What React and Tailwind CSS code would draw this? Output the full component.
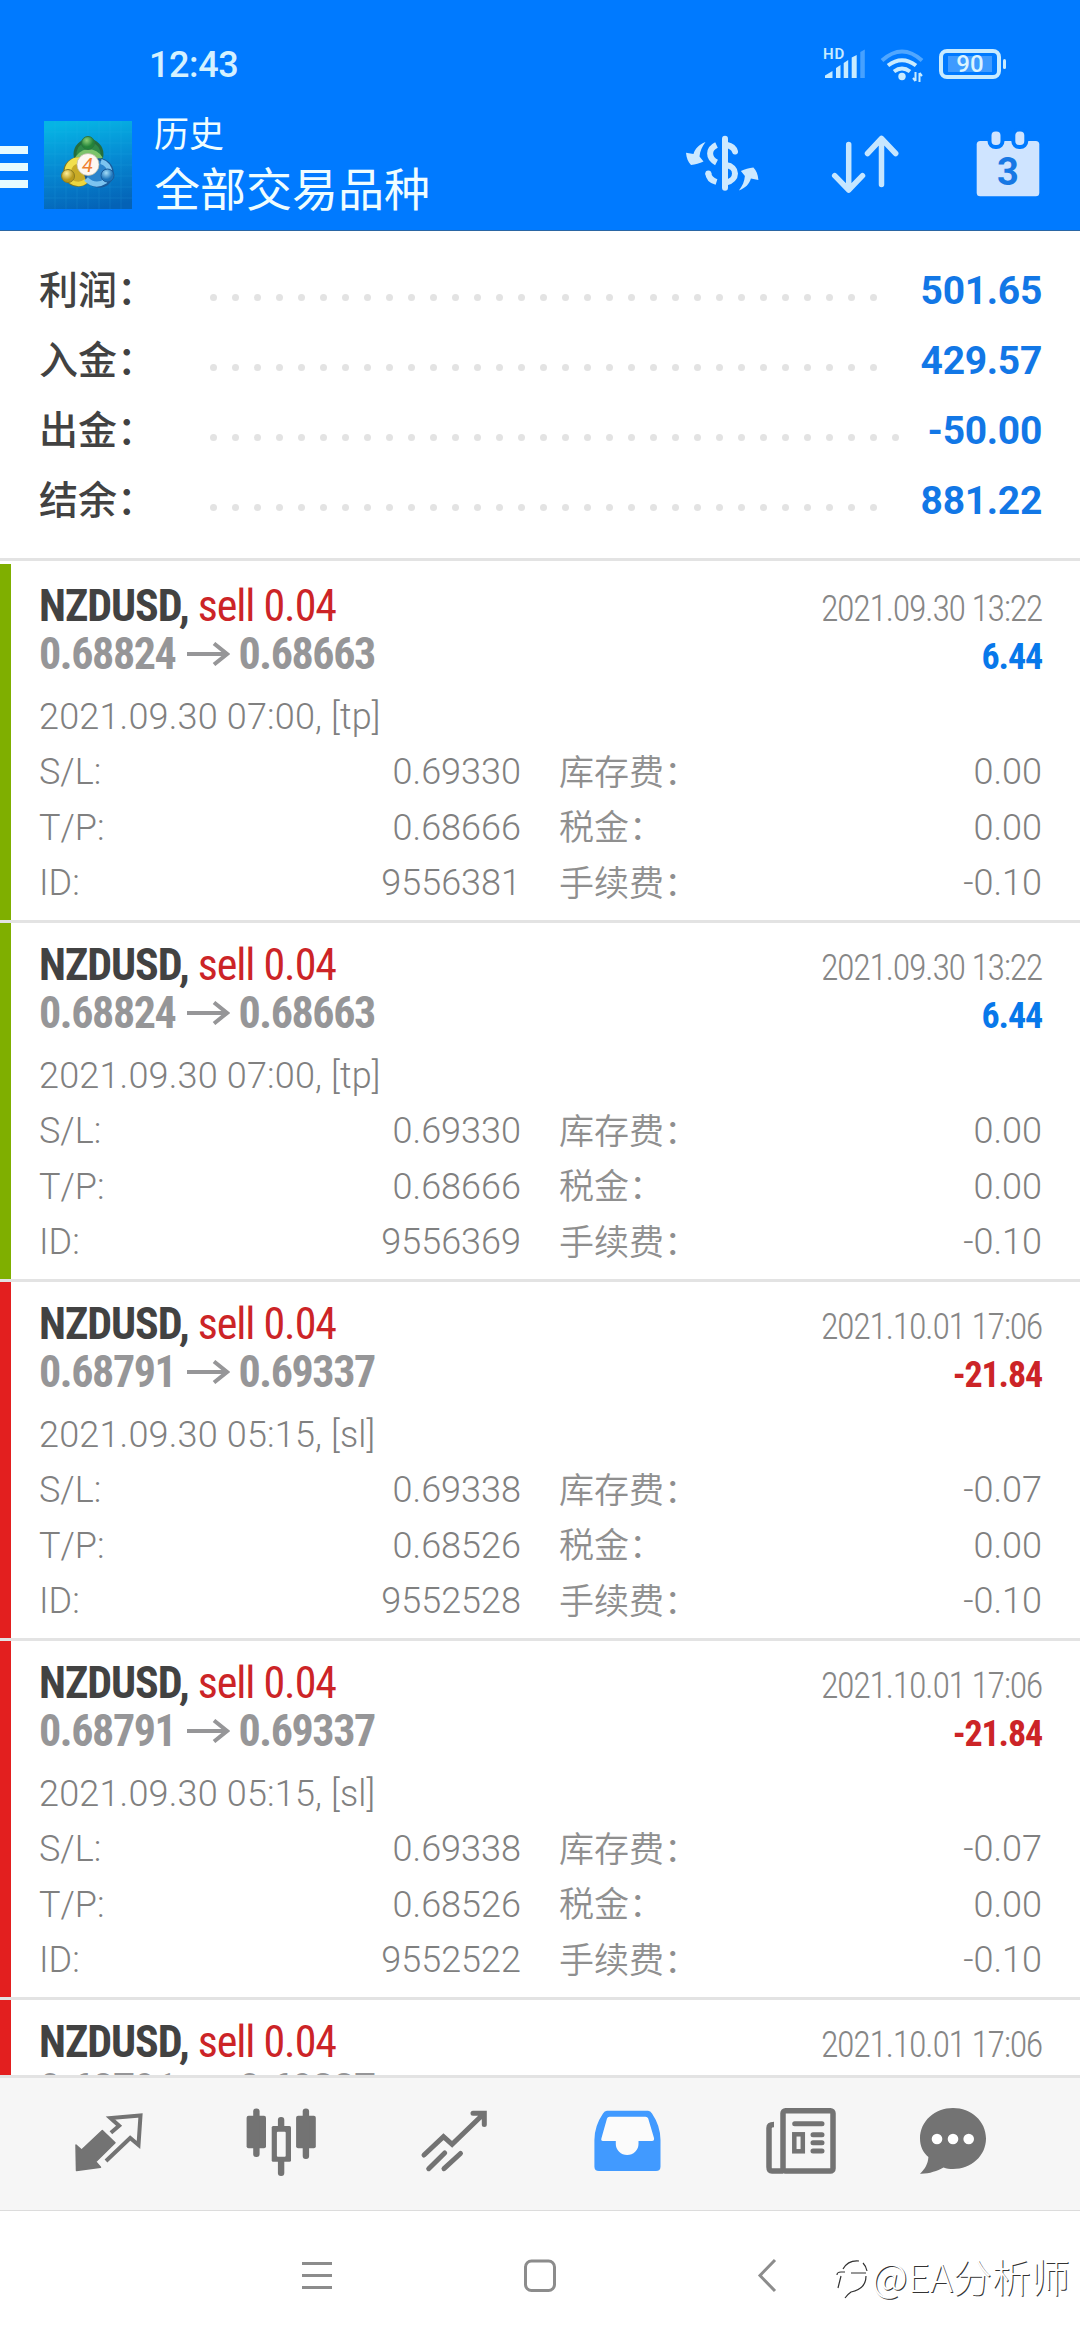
const COLON = '\uff1a'

const summary = [
  { label: '利润', value: '501.65', dots: 31 },
  { label: '入金', value: '429.57', dots: 31 },
  { label: '出金', value: '-50.00', dots: 32 },
  { label: '结余', value: '881.22', dots: 31 },
]

const tp = { open: '0.68824', close: '0.68663', closed: '2021.09.30 13:22', profit: '6.44', opened: '2021.09.30 07:00, [tp]', sl: '0.69330', tp: '0.68666', swap: '0.00' }
const sl = { open: '0.68791', close: '0.69337', closed: '2021.10.01 17:06', profit: '-21.84', opened: '2021.09.30 05:15, [sl]', sl: '0.69338', tp: '0.68526', swap: '-0.07' }

const deals = [
  { ...tp, id: '9556381' },
  { ...tp, id: '9556369' },
  { ...sl, id: '9552528' },
  { ...sl, id: '9552522' },
  { ...sl, id: '9552519' },
]

const condensed = "font-['Roboto_Condensed','Roboto',sans-serif] font-stretch-condensed whitespace-nowrap"

function SignalIcon() {
  return (
    <svg className="h-[40px] w-[48px]" viewBox="0 0 48 40" fill="#c8ebff">
      <text x="2" y="14.7" fontSize="15" fontWeight="600" fontFamily="Roboto, sans-serif" letterSpacing="0.8">HD</text>
      <path d="M4 34v-2.5l7.500-4.500v7zM15 34V24l4.500-3v13zM22.700 34V19l4.500-3v18zM30.700 34V13.500l5-2.500v23z" />
      <path d="M39.300 34V8l4.500-2.500V34z" opacity="0.35" />
    </svg>
  )
}

function WifiIcon() {
  return (
    <svg className="h-[40px] w-[50px]" viewBox="0 0 50 40" fill="none" stroke="#c8ebff" strokeWidth="4">
      <path d="M3 16.500Q23 -1.500 43 16.500" opacity="0.4" />
      <path d="M9 21.500Q23 11 37 21.500" />
      <path d="M15 27.500Q23 21.500 31 27.500" />
      <circle cx="23" cy="32.500" r="3.700" fill="#c8ebff" stroke="none" />
      <path d="M36.500 28v9M36.500 37l-2.500-3M40.500 38v-9M40.500 29l2.500 3" strokeWidth="2" />
    </svg>
  )
}

function Battery() {
  return (
    <div className="flex items-center gap-[2px]">
      <div className="flex h-[30px] w-[62px] items-center justify-center rounded-[8px] border-4 border-[#c8ebff]">
        <span className="flex h-[16px] w-[44px] items-center justify-center bg-[#3f9bff] text-[24px] leading-none font-medium text-[#dcf4ff]">90</span>
      </div>
      <div className="h-[10px] w-[3px] rounded-full bg-[#c8ebff]" />
    </div>
  )
}

function AppLogo() {
  return (
    <svg className="h-[88px] w-[88px]" viewBox="0 0 88 88">
      <defs>
        <linearGradient id="sky" x1="0.400" y1="0" x2="0.600" y2="1">
          <stop offset="0" stopColor="#06b4e4" />
          <stop offset="0.500" stopColor="#0688d2" />
          <stop offset="1" stopColor="#0462b6" />
        </linearGradient>
        <radialGradient id="green" cx="0.400" cy="0.300">
          <stop offset="0" stopColor="#8ccf78" />
          <stop offset="1" stopColor="#23843a" />
        </radialGradient>
        <radialGradient id="gold" cx="0.400" cy="0.300">
          <stop offset="0" stopColor="#fff09a" />
          <stop offset="1" stopColor="#b99a1c" />
        </radialGradient>
        <radialGradient id="blue" cx="0.400" cy="0.300">
          <stop offset="0" stopColor="#a4ddf8" />
          <stop offset="1" stopColor="#1c74bb" />
        </radialGradient>
      </defs>
      <rect width="88" height="88" fill="url(#sky)" />
      <path d="M11 0v88M22 0v88M33 0v88M44 0v88M55 0v88M66 0v88M77 0v88M0 11h88M0 22h88M0 33h88M0 44h88M0 55h88M0 66h88M0 77h88" stroke="#35bdf0" strokeWidth="0.800" opacity="0.180" />
      <circle cx="44.500" cy="33" r="13.500" fill="#2f8a48" stroke="#256d3c" strokeWidth="3" />
      <path d="M33 40A12.500 12.500 0 0 1 56 38" fill="none" stroke="#7cc46c" strokeWidth="6" />
      <circle cx="34" cy="51" r="13.500" fill="#c9ab26" stroke="#7f7720" strokeWidth="2.500" />
      <path d="M24 52A11 11 0 0 1 36 39.500" fill="none" stroke="#f2e04e" strokeWidth="6.500" />
      <path d="M26 60Q35 66 42 60" fill="none" stroke="#ecd63f" strokeWidth="4.500" />
      <circle cx="55" cy="52" r="13.500" fill="#2b84cc" stroke="#1a5c9c" strokeWidth="2.500" />
      <path d="M57 40.500A12 12 0 0 1 66 52M42 58Q51 67 62 60" fill="none" stroke="#7cc4f0" strokeWidth="5" />
      <circle cx="44" cy="22" r="6.500" fill="url(#green)" stroke="#2a7440" />
      <circle cx="24" cy="55" r="6.500" fill="url(#gold)" stroke="#8b7c20" />
      <circle cx="63.500" cy="54.500" r="6.500" fill="url(#blue)" stroke="#1a5c9c" />
      <circle cx="44" cy="43.500" r="11" fill="#fdf8f2" stroke="#b9b8a4" strokeWidth="0.700" />
      <text x="43.500" y="50.500" textAnchor="middle" fontSize="20" fontStyle="italic" fontFamily="Roboto, sans-serif" fill="#ef8030">4</text>
    </svg>
  )
}

function CurrencyIcon() {
  const arrow = 'M23.500 10C17 12.500 13 16.500 11.500 22L4 20.700C4.500 26 6 30 9 33C13.500 32.500 17.500 31.500 21.500 29.500L17.500 24.500C18 19 20 14.500 23.500 10Z'
  return (
    <svg className="h-[64px] w-[80px]" viewBox="0 0 80 64" fill="none" stroke="#cde9ff" strokeWidth="6">
      <path d={arrow} fill="#cde9ff" stroke="none" />
      <path d={arrow} fill="#cde9ff" stroke="none" transform="rotate(180 40.200 34.300)" />
      <path d="M34.500 13C26 17 26 26 34.500 30.500M34.500 50C29.500 48.500 26.500 45 26.300 41" />
      <circle cx="26.300" cy="41.500" r="3" fill="#cde9ff" stroke="none" />
      <path d="M43 6.700V55.700" strokeLinecap="round" />
      <path d="M45 13C49.500 14 52 16 53 19.500" strokeLinecap="round" />
      <path d="M44 33C56 34.500 56 48 44 50.500" />
    </svg>
  )
}

function SortIcon() {
  return (
    <svg className="h-[64px] w-[76px]" viewBox="0 0 76 64" fill="none" stroke="#c6e6ff" strokeWidth="5.500" strokeLinecap="round" strokeLinejoin="round">
      <path d="M20.700 12.500V58M6.700 43.700L20.700 58L34.500 43.700" />
      <path d="M53.500 52.500V6.500M39.500 21.500L53.500 6.500L67.700 21.500" />
    </svg>
  )
}

function CalendarIcon() {
  return (
    <svg className="h-[72px] w-[72px]" viewBox="0 0 72 72" fill="#cfe4ff">
      <rect x="4.700" y="13" width="62.600" height="55.300" rx="3.500" />
      <g stroke="#007aff" strokeWidth="4">
        <rect x="17.500" y="1.500" width="13" height="17.500" rx="6" />
        <rect x="41.300" y="1.500" width="13" height="17.500" rx="6" />
      </g>
      <text x="36" y="56.500" textAnchor="middle" fontSize="38" fontWeight="700" fontFamily="Roboto, sans-serif" fill="#1878e4">3</text>
    </svg>
  )
}

function Header() {
  return (
    <header className="h-[231px] shrink-0 border-b border-[#2a66a4] bg-[#007aff]">
      <div className="flex h-[109px] items-start justify-between pt-[44px] pr-[74px] pl-[149px]">
        <span className="text-[36px] leading-[42px] font-medium tracking-[-0.400px] text-[#d4f1ff]">12:43</span>
        <div className="flex items-start">
          <SignalIcon />
          <div className="ml-[10px]"><WifiIcon /></div>
          <div className="mt-[5px] ml-[10px]"><Battery /></div>
        </div>
      </div>
      <div className="flex">
        <div className="mt-[37px] flex w-[28px] flex-col gap-[9px]">
          <i className="h-[8px] bg-[#e6fbff]" />
          <i className="h-[8px] bg-[#e6fbff]" />
          <i className="h-[8px] bg-[#e6fbff]" />
        </div>
        <div className="mt-[12px] ml-[16px]"><AppLogo /></div>
        <div className="ml-[22px] flex flex-1 flex-col font-['Noto_Sans_CJK_SC',sans-serif] text-[#effdff]">
          <span className="mt-[3px] text-[35px] leading-[40px]">历史</span>
          <span className="mt-[4px] text-[46px] leading-[60px]">全部交易品种</span>
        </div>
        <div className="mt-[23px]"><CurrencyIcon /></div>
        <div className="mt-[23px] ml-[66px]"><SortIcon /></div>
        <div className="mt-[19px] mr-[36px] ml-[68px]"><CalendarIcon /></div>
      </div>
    </header>
  )
}

function SummaryRow({ row }) {
  return (
    <div className="flex h-[70px] items-center">
      <span className="mb-[6px] w-[171px] font-['Noto_Sans_CJK_SC',sans-serif] text-[39px] font-medium text-[#424242]">
        {row.label}{COLON}
      </span>
      <div className="mt-[15px] flex flex-1 gap-[15px]">
        {Array.from({ length: row.dots }, (_, i) => (
          <i key={i} className="h-[7px] w-[7px] shrink-0 rounded-full bg-[#e3e3e3]" />
        ))}
      </div>
      <span className="mt-[2px] text-[39px] font-bold tracking-[-0.300px] text-[#1277e6]">{row.value}</span>
    </div>
  )
}

function DetailRow({ label, value, fee, amount }) {
  return (
    <div className="flex h-[55.500px] items-center pt-px text-[36px] font-light text-[#808080]">
      <span className="w-[200px]">{label}</span>
      <span className="w-[282px] text-right">{value}</span>
      <span className="mb-[5px] ml-[38px] flex-1 font-['Noto_Sans_CJK_SC',sans-serif] text-[35px] font-[350] text-[#8f8f8f]">{fee}{COLON}</span>
      <span>{amount}</span>
    </div>
  )
}

function Deal({ deal }) {
  const loss = deal.profit.startsWith('-')
  return (
    <div className="flex h-[359px] shrink-0 border-b-3 border-[#e3e3e3]">
      <div className={`w-[11px] ${loss ? 'bg-[#e31f1f]' : 'bg-[#7faf00]'}`} />
      <div className="flex-1 pt-[17px] pr-[38px] pl-[28px]">
        <div className="flex h-[49px] items-center justify-between">
          <span className={`${condensed} text-[44px] tracking-[-1.050px]`}>
            <b className="text-[#424242]">NZDUSD,</b> <span className="text-[#cc2427]">sell 0.04</span>
          </span>
          <span className={`${condensed} mt-[7px] text-[36px] font-[350] tracking-[-1.350px] text-[#868686]`}>{deal.closed}</span>
        </div>
        <div className="flex h-[48px] items-center">
          <b className={`${condensed} text-[44px] tracking-[-1.400px] text-[#969698]`}>{deal.open}</b>
          <svg className="mr-[8px] ml-[11px] h-[24px] w-[44px]" viewBox="0 0 44 24" fill="none" stroke="#969698" strokeWidth="4">
            <path d="M1 12H41M28 1.500L41 12L28 22.500" />
          </svg>
          <b className={`${condensed} text-[44px] tracking-[-1.400px] text-[#969698]`}>{deal.close}</b>
          <b className={`${condensed} mt-[6px] ml-auto text-[36px] tracking-[-1.150px] ${loss ? 'text-[#cc2427]' : 'text-[#0878ea]'}`}>{deal.profit}</b>
        </div>
        <p className="mt-[11px] h-[55px] text-[36px] leading-[56px] font-light tracking-[0.180px] text-[#808080]">{deal.opened}</p>
        <DetailRow label="S/L:" value={deal.sl} fee="库存费" amount={deal.swap} />
        <DetailRow label="T/P:" value={deal.tp} fee="税金" amount="0.00" />
        <DetailRow label="ID:" value={deal.id} fee="手续费" amount="-0.10" />
      </div>
    </div>
  )
}

function TabBar() {
  return (
    <nav className="flex h-[136px] shrink-0 items-start border-t-3 border-b border-t-[#e3e3e3] border-b-[#dcdcdc] bg-[#f6f6f6] pt-[26px] pl-[69px]">
      <svg className="mr-[92px] h-[80px] w-[80px]" viewBox="0 0 80 80" fill="none" stroke="#737373">
        <path d="M33.300 26.500L46 38.700L26.700 57.700L31.500 63.300L7.500 66.500L7 41L12.600 46Z" fill="#737373" strokeWidth="1.500" strokeLinejoin="round" />
        <path d="M41.900 28.700L50.100 21.700L41.500 14L71.500 11.500L69.500 41L61.200 34L37 57" strokeWidth="4" />
      </svg>
      <svg className="mr-[93px] h-[80px] w-[80px]" viewBox="0 0 80 80" fill="#737373">
        <rect x="5.600" y="11.700" width="19.400" height="32.600" rx="2" />
        <rect x="12.200" y="4.500" width="6.400" height="48.500" rx="3" />
        <rect x="55.100" y="11.700" width="19.700" height="32.600" rx="2" />
        <rect x="61.700" y="4.500" width="6.400" height="50.500" rx="3" />
        <rect x="36.900" y="13" width="6.400" height="59" rx="3" />
        <rect x="30.700" y="22" width="19.300" height="35.700" rx="1.500" />
        <rect x="35.900" y="27.700" width="8.800" height="25" rx="1" fill="#f6f6f6" />
      </svg>
      <svg className="mr-[93px] h-[80px] w-[80px]" viewBox="0 0 80 80" fill="none" stroke="#737373" strokeWidth="5" strokeLinecap="round">
        <path d="M10 51L29.500 32.700L38.100 40.300L70 9.500M59 9.300H70.300V20.500M14.700 64.700L30.700 49M30 64.700L46.500 49.500" />
      </svg>
      <svg className="mr-[94px] h-[80px] w-[80px]" viewBox="0 0 80 80" fill="#419aff">
        <path d="M20 6.700H61Q63.500 6.700 65 9.500Q73.500 22 73.500 36V62.500Q73.500 67 69 67H12Q7.400 67 7.400 62.500V36Q7.400 22 16 9.500Q17.500 6.700 20 6.700Z" />
        <path d="M22.500 12.700H58.500Q60.500 12.700 61.200 14.500L67 34Q67.500 37 65 37H51.500V40A11.300 11 0 0 1 28.800 40V37H16Q13.500 37 14.500 34L20 14.500Q20.500 12.700 22.500 12.700Z" fill="#fbfbfb" />
      </svg>
      <svg className="mr-[72px] h-[80px] w-[80px]" viewBox="0 0 80 80" fill="none" stroke="#737373" strokeWidth="5.500" strokeLinecap="round">
        <rect x="22" y="6.700" width="50" height="60.300" rx="2.500" />
        <path d="M22 67H11Q8 67 8 63V24Q8 20.500 13 20.500" strokeLinecap="butt" />
        <path d="M33.700 19.700H61M52 30.700H61M52 38.700H61M52 47H61" strokeWidth="5" />
        <rect x="33.300" y="30.300" width="8.500" height="17" strokeWidth="4.500" />
      </svg>
      <svg className="h-[80px] w-[80px]" viewBox="0 0 80 80" fill="#737373">
        <path d="M40 4C58 4 73 17 73 34.500C73 52 58 65 40 65C36.500 65 33.500 64.500 30.500 63.500C24 67 16 70 7 69.700C12 65 15 60 15.400 53C10 48.500 7 42 7 34.500C7 17 22 4 40 4Z" />
        <g fill="#ffffff">
          <circle cx="24" cy="35" r="5.300" />
          <circle cx="40" cy="35" r="5.300" />
          <circle cx="55.700" cy="35" r="5.300" />
        </g>
      </svg>
    </nav>
  )
}

function SystemNav() {
  return (
    <div className="flex flex-1 items-start pt-[45px] pl-[300px] text-[#8c8c8c]">
      <svg className="h-[40px] w-[34px] shrink-0" viewBox="0 0 34 40" stroke="currentColor" strokeWidth="3">
        <path d="M2 7.500H32M2 19.500H32M2 31.500H32" />
      </svg>
      <svg className="ml-[188px] h-[40px] w-[36px] shrink-0" viewBox="0 0 36 40" fill="none" stroke="currentColor" strokeWidth="3">
        <rect x="3.500" y="5" width="29" height="29.500" rx="6" />
      </svg>
      <svg className="ml-[198px] h-[40px] w-[22px] shrink-0" viewBox="0 0 22 40" fill="none" stroke="currentColor" strokeWidth="3">
        <path d="M19 4L4 19.500L19 35" />
      </svg>
      <svg className="ml-[58px] h-[48px] w-[36px] shrink-0" viewBox="0 0 36 48" fill="none" stroke="#333333" strokeWidth="1.200">
        <path d="M7 13Q12 4 23 5M1 19Q1 16 5 16L9 16M5 20L2 32M15 17H30M30 20Q30 33 15 36Q12 38 9 42M31 15Q30 10 27 7" />
      </svg>
      <span className="-mt-[4px] font-['Noto_Sans_CJK_SC',sans-serif] text-[39px] leading-[46px] font-light whitespace-nowrap text-white [text-shadow:1px_1px_0px_#333]">@EA分析师</span>
    </div>
  )
}

export default function App() {
  return (
    <div className="flex h-[2340px] w-[1080px] flex-col overflow-hidden bg-white font-['Roboto',sans-serif]">
      <Header />
      <section className="h-[330px] shrink-0 border-b-3 border-[#e3e3e3] pt-[24px] pr-[38px] pl-[39px]">
        {summary.map((row) => (
          <SummaryRow key={row.label} row={row} />
        ))}
      </section>
      <main className="flex h-[1514px] shrink-0 flex-col overflow-hidden pt-[3px]">
        {deals.map((deal) => (
          <Deal key={deal.id} deal={deal} />
        ))}
      </main>
      <TabBar />
      <SystemNav />
    </div>
  )
}
